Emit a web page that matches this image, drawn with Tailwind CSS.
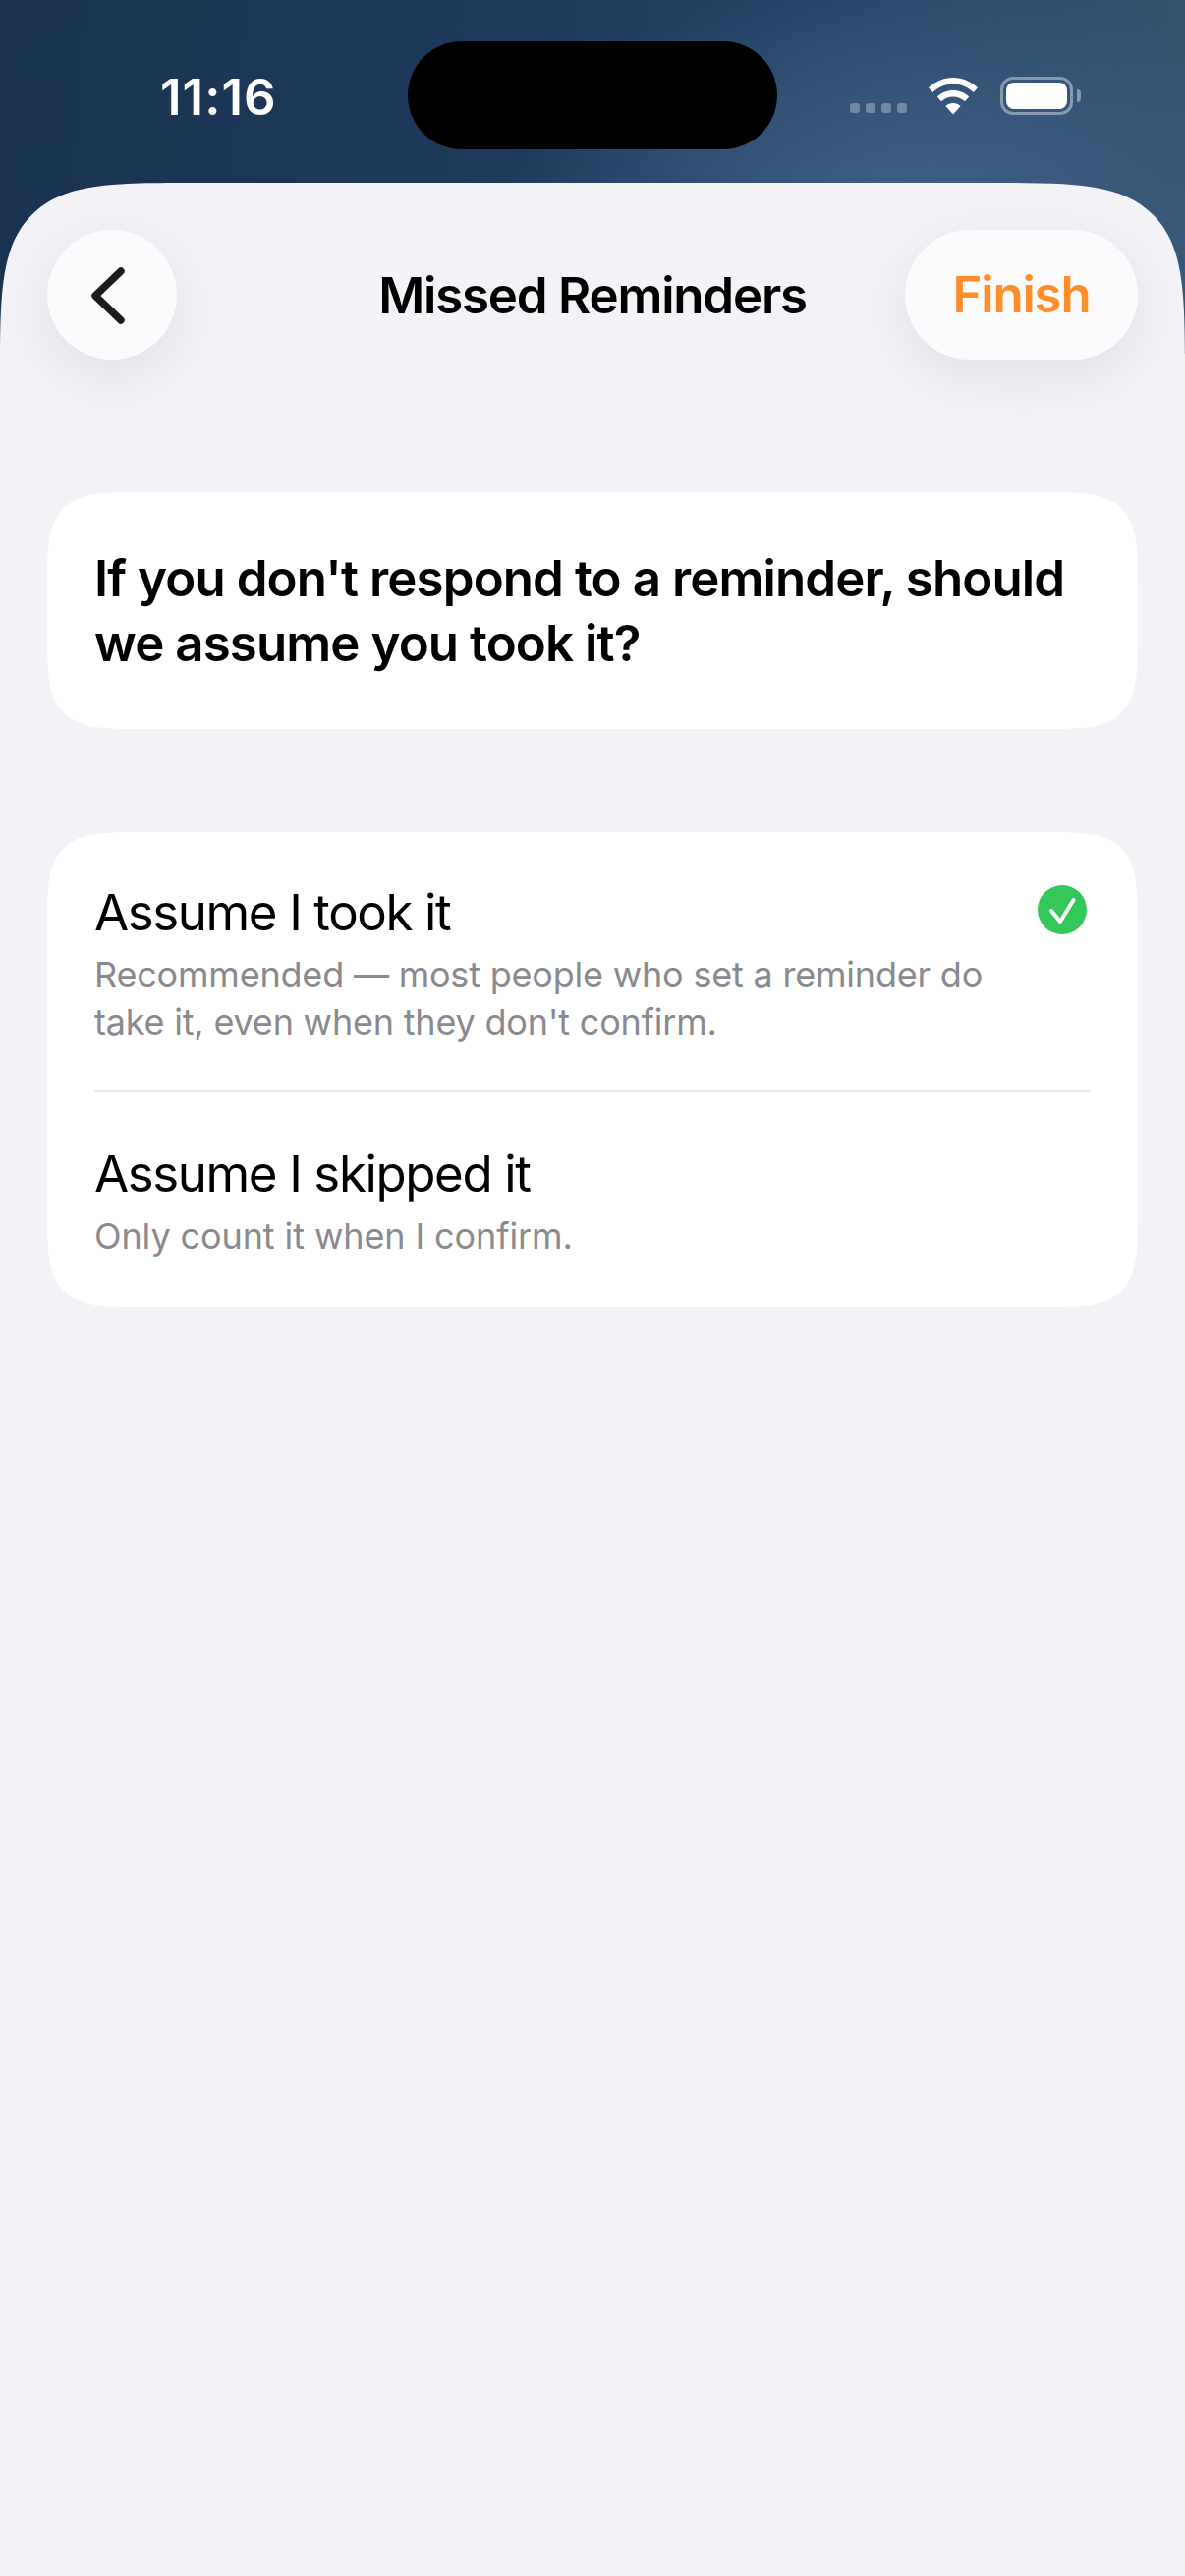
<!DOCTYPE html>
<html lang="en">
<head>
  <meta charset="UTF-8" />
  <meta name="viewport" content="width=device-width, initial-scale=1" />
  <title>Missed Reminders</title>
  <script src="https://cdn.jsdelivr.net/npm/@tailwindcss/browser@4"></script>
</head>
<body class="bg-[#f2f2f7] font-['Inter',sans-serif] text-black">
  <div class="w-[1206px] h-[2622px] flex flex-col overflow-hidden bg-no-repeat bg-size-[100%_360px] bg-[radial-gradient(ellipse_420px_260px_at_930px_230px,#41638a_0%,rgba(65,99,138,0)_100%),linear-gradient(95deg,#1a3352_0%,#1e3b5c_45%,#264568_70%,#34536f_100%)]">

    <!-- Status bar -->
    <div class="h-[186px] shrink-0 relative">
      <div class="flex items-start pt-[42px] pl-[163px]">
        <span class="w-[252px] mt-[26px] text-[51px] leading-[62px] font-semibold text-white tracking-[1px]">11:16</span>
        <div class="w-[376px] h-[110px] rounded-full bg-black"></div>
        <div class="ml-[74px] mt-[36px] flex items-end">
          <!-- cell dots -->
          <div class="flex gap-[6px] mb-[2px]">
            <div class="w-[10px] h-[10px] rounded-[3px] bg-white/30"></div>
            <div class="w-[10px] h-[10px] rounded-[3px] bg-white/30"></div>
            <div class="w-[10px] h-[10px] rounded-[3px] bg-white/30"></div>
            <div class="w-[10px] h-[10px] rounded-[3px] bg-white/30"></div>
          </div>
          <!-- wifi -->
          <svg class="ml-[22px]" width="50" height="38" viewBox="0 0 50 38" fill="#fff">
            <path d="M25 0C15.500 0 7 3.700 0 10.300L4.200 15C10 9.500 17.200 6.400 25 6.400C32.800 6.400 40 9.500 45.800 15L50 10.300C43 3.700 34.500 0 25 0Z" />
            <path d="M25 13C18.800 13 13.200 15.300 8.800 19.500L13 24.200C16.300 21.200 20.500 19.400 25 19.400C29.500 19.400 33.700 21.200 37 24.200L41.200 19.500C36.800 15.300 31.200 13 25 13Z" />
            <path d="M25 26C22 26 19.500 27 17.400 28.900L25 37.500L32.600 28.900C30.500 27 28 26 25 26Z" />
          </svg>
          <!-- battery -->
          <div class="ml-[23px] flex items-center">
            <div class="w-[74px] h-[39px] rounded-[13px] border-[3px] border-white/40 p-[3px]">
              <div class="w-full h-full rounded-[8px] bg-white"></div>
            </div>
            <div class="ml-[4px] w-[4px] h-[13px] rounded-r-full bg-white/40"></div>
          </div>
        </div>
      </div>
    </div>

    <!-- Sheet -->
    <div class="flex-1 bg-[#f2f2f7] rounded-t-[205px] [corner-shape:squircle] px-[48px] pt-[48px]">
      <!-- Nav -->
      <div class="grid grid-cols-[1fr_auto_1fr] items-center h-[132px]">
        <button class="w-[132px] h-[132px] rounded-full bg-[#fbfbfe] shadow-[0_16px_60px_rgba(0,0,0,0.08)] flex items-center justify-center">
          <svg width="132" height="132" viewBox="0 0 132 132" fill="none" stroke="#1c1c1e" stroke-width="7.500" stroke-linecap="round" stroke-linejoin="round">
            <path d="M75 42L49 67L75 92" />
          </svg>
        </button>
        <h1 class="text-[51px] leading-[62px] font-semibold tracking-[-1.2px] pt-[2px]">Missed Reminders</h1>
        <button class="justify-self-end w-[237px] h-[132px] rounded-[66px] bg-[#fbfbfe] shadow-[0_16px_60px_rgba(0,0,0,0.08)] text-[51px] font-semibold tracking-[-1.2px] text-[#ff8d28]">Finish</button>
      </div>

      <!-- Question -->
      <div class="mt-[135px] h-[241px] rounded-[104px] [corner-shape:squircle] bg-white px-[48px] pt-[55px]">
        <p class="text-[51px] leading-[66px] font-semibold tracking-[-0.9px]">If you don't respond to a reminder, should we assume you took it?</p>
      </div>

      <!-- Options -->
      <div class="mt-[105px] rounded-[104px] [corner-shape:squircle] bg-white px-[48px]">
        <div class="relative pt-[51px] pb-[45px] border-b-[3px] border-[#e9e9eb]">
          <div class="text-[51px] leading-[62px] tracking-[-1.4px]">Assume I took it</div>
          <p class="mt-[8px] w-[930px] text-[36px] leading-[48px] tracking-[-0.2px] text-[#8a8a8e]">Recommended — most people who set a reminder do take it, even when they don't confirm.</p>
          <div class="absolute right-[4px] top-[51px] mt-[3px] w-[50px] h-[50px] rounded-full bg-[#34c759]">
            <svg width="50" height="50" viewBox="0 0 50 50" fill="none" stroke="#fff" stroke-width="4" stroke-linecap="round" stroke-linejoin="round">
              <path d="M14 26L23 37L36.500 15" />
            </svg>
          </div>
        </div>
        <div class="pt-[52px] pb-[48px]">
          <div class="text-[51px] leading-[62px] tracking-[-1.4px]">Assume I skipped it</div>
          <p class="mt-[8px] text-[36px] leading-[48px] tracking-[-0.1px] text-[#8a8a8e]">Only count it when I confirm.</p>
        </div>
      </div>
    </div>
  </div>
</body>
</html>
